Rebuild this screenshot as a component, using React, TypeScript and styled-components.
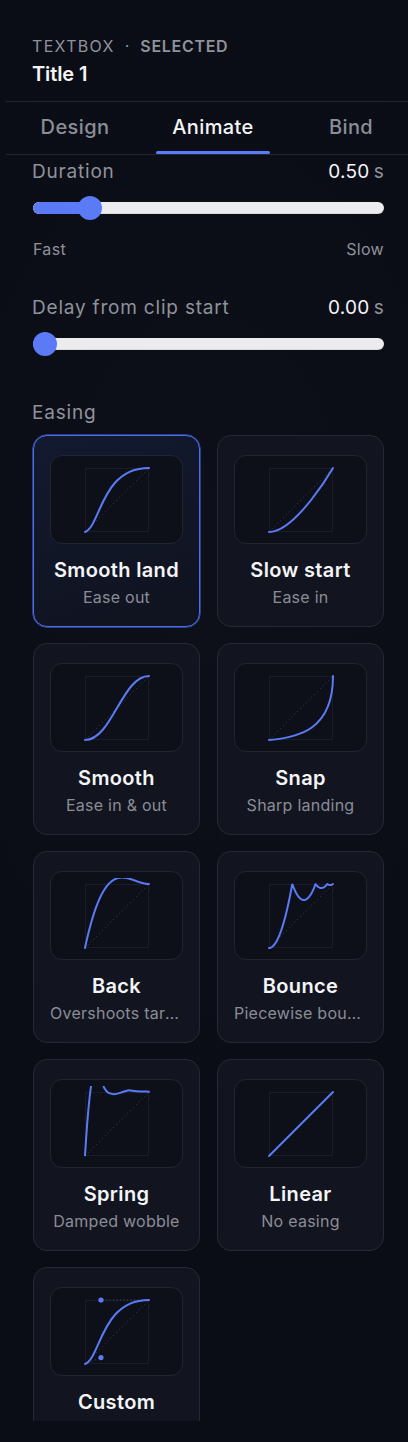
import React from "react";
import styled, { createGlobalStyle } from "styled-components";

const GlobalStyle = createGlobalStyle`
  html, body { margin: 0; padding: 0; background: #0b0d16; }
  body { font-family: Inter, "Noto Sans", sans-serif; overflow: hidden; -webkit-font-smoothing: antialiased; }
  * { box-sizing: border-box; }
`;

const ACCENT = "#5a7bf5";

const Page = styled.div`
  width: 408px;
  height: 1442px;
  overflow: hidden;
  background: radial-gradient(120% 60% at 50% 40%, #0e1019 0%, #0b0d16 70%);
  color: #f2f3f6;
`;

const Header = styled.header`
  padding: 36px 32px 13px;
  display: flex;
  flex-direction: column;
  gap: 4px;
`;

const Eyebrow = styled.div`
  display: flex;
  align-items: center;
  height: 20px;
  font-size: 16px;
  color: #8f929b;
  text-transform: uppercase;
  white-space: nowrap;
`;

const Kind = styled.span`
  letter-spacing: 1.3px;
  font-weight: 400;
`;

const Sep = styled.span`
  margin: 0 11px 0 10px;
  font-weight: 400;
`;

const State = styled.span`
  letter-spacing: 0.7px;
  font-weight: 600;
`;

const Title = styled.h1`
  margin: 0;
  font-size: 20px;
  line-height: 28px;
  font-weight: 600;
  color: #f4f5f7;
  letter-spacing: -0.1px;
`;

const Divider = styled.div`
  height: 1px;
  margin-left: 6px;
  background: #242732;
`;

const Tabs = styled.nav`
  display: grid;
  grid-template-columns: repeat(3, 138px);
  margin-left: 6px;
  width: 414px;
  height: 52px;
`;

const Tab = styled.div<{ $active?: boolean }>`
  display: flex;
  flex-direction: column;
  font-size: 20px;
  font-weight: 500;
  letter-spacing: 0.4px;
  color: ${(p) => (p.$active ? "#f4f5f7" : "#8b8e97")};
`;

const TabLabel = styled.span`
  flex: 1;
  display: flex;
  align-items: center;
  justify-content: center;
  padding-top: 1px;
`;

const TabBar = styled.span<{ $active?: boolean }>`
  height: 3px;
  margin: 0 12px;
  border-radius: 2px;
  background: ${(p) => (p.$active ? ACCENT : "transparent")};
`;

const Scroll = styled.main`
  height: 1266px;
  overflow: hidden;
  padding: 4px 24px 0 33px;
  display: flex;
  flex-direction: column;
  & > * {
    flex-shrink: 0;
  }
`;

const FieldHead = styled.div<{ $mt?: number }>`
  display: flex;
  justify-content: space-between;
  align-items: center;
  height: 24px;
  margin-top: ${(p) => p.$mt ?? 0}px;
`;

const Label = styled.span`
  font-size: 19px;
  color: #8f929b;
  letter-spacing: 0.8px;
  margin-left: -1px;
`;

const Value = styled.span`
  font-size: 19px;
  color: #f4f5f7;
  letter-spacing: 0.3px;
`;

const Unit = styled.span`
  color: #8f929b;
  margin-left: 4px;
`;

const SliderBox = styled.div<{ $mt: number }>`
  position: relative;
  height: 24px;
  margin-top: ${(p) => p.$mt}px;
  display: flex;
  align-items: center;
`;

const Track = styled.div`
  position: relative;
  width: 100%;
  height: 12px;
  border-radius: 6px;
  background: #ececee;
  box-shadow: inset 0 -1px 0 rgba(0, 0, 0, 0.08);
  overflow: hidden;
`;

const Fill = styled.div`
  height: 100%;
  background: ${ACCENT};
  border-radius: 6px 0 0 6px;
`;

const Thumb = styled.div`
  position: absolute;
  top: 0;
  width: 24px;
  height: 24px;
  border-radius: 50%;
  background: ${ACCENT};
`;

const Scale = styled.div`
  display: flex;
  justify-content: space-between;
  height: 20px;
  margin-top: 19px;
  font-size: 16px;
  color: #8f929b;
  align-items: center;
  letter-spacing: 0.3px;
`;

const SectionLabel = styled.div`
  height: 24px;
  margin-top: 44px;
  font-size: 19px;
  color: #8f929b;
  display: flex;
  align-items: center;
  letter-spacing: 0.8px;
  margin-left: -1px;
`;

const Grid = styled.div`
  margin-top: 11px;
  display: grid;
  grid-template-columns: 167px 167px;
  column-gap: 17px;
  row-gap: 16px;
`;

const Card = styled.div<{ $selected?: boolean }>`
  height: 192px;
  border-radius: 14px;
  border: 1px solid ${(p) => (p.$selected ? "#4e6ef0" : "#262935")};
  background: ${(p) =>
    p.$selected
      ? "linear-gradient(160deg, #121a31 0%, #111626 55%, #10131f 100%)"
      : "#121420"};
  box-shadow: ${(p) => (p.$selected ? "0 0 0 0.5px #4e6ef0" : "none")};
  padding: 19px 16px 0;
  display: flex;
  flex-direction: column;
  align-items: center;
  overflow: hidden;
`;

const Preview = styled.div`
  width: 133px;
  height: 89px;
  border-radius: 12px;
  border: 1px solid #222531;
  background: #0e1019;
  display: flex;
  align-items: center;
  justify-content: center;
  flex-shrink: 0;
`;

const CardTitle = styled.div`
  margin-top: 13px;
  height: 26px;
  line-height: 26px;
  font-size: 20px;
  font-weight: 600;
  color: #f4f5f7;
  letter-spacing: 0.35px;
  white-space: nowrap;
  flex-shrink: 0;
`;

const CardSub = styled.div`
  margin-top: 4px;
  height: 20px;
  line-height: 20px;
  width: 100%;
  text-align: center;
  font-size: 16px;
  color: #8a8d96;
  letter-spacing: 0.25px;
  white-space: nowrap;
  overflow: hidden;
  text-overflow: ellipsis;
  flex-shrink: 0;
`;

// ---------- curve geometry ----------
const S = 64;
const P = 6;
const X = (t: number) => P + S * t;
const Y = (v: number) => P + S * (1 - v);
const f = (n: number) => n.toFixed(2);

type Curve =
  | { kind: "bezier"; p: [number, number, number, number]; handles?: boolean }
  | { kind: "fn"; fn: (t: number) => number }
  | { kind: "pts"; pts: [number, number][] };

function bezierPath(p: [number, number, number, number]) {
  return `M${f(X(0))} ${f(Y(0))} C${f(X(p[0]))} ${f(Y(p[1]))} ${f(X(p[2]))} ${f(Y(p[3]))} ${f(X(1))} ${f(Y(1))}`;
}

function fnPath(fn: (t: number) => number) {
  const n = 240;
  let d = "";
  for (let i = 0; i <= n; i++) {
    const t = i / n;
    d += `${i === 0 ? "M" : "L"}${f(X(t))} ${f(Y(fn(t)))} `;
  }
  return d;
}

function splinePath(pts: [number, number][]) {
  const q = pts.map(([t, v]) => [X(t), Y(v)] as [number, number]);
  let d = `M${f(q[0][0])} ${f(q[0][1])}`;
  for (let i = 0; i < q.length - 1; i++) {
    const p0 = q[Math.max(0, i - 1)];
    const p1 = q[i];
    const p2 = q[i + 1];
    const p3 = q[Math.min(q.length - 1, i + 2)];
    const c1x = p1[0] + (p2[0] - p0[0]) / 6;
    const c1y = p1[1] + (p2[1] - p0[1]) / 6;
    const c2x = p2[0] - (p3[0] - p1[0]) / 6;
    const c2y = p2[1] - (p3[1] - p1[1]) / 6;
    d += ` C${f(c1x)} ${f(c1y)} ${f(c2x)} ${f(c2y)} ${f(p2[0])} ${f(p2[1])}`;
  }
  return d;
}

const easeOutBack = (t: number) => {
  const c1 = 1.70158;
  const c3 = c1 + 1;
  return 1 + c3 * Math.pow(t - 1, 3) + c1 * Math.pow(t - 1, 2);
};

const easeOutBounce = (x: number) => {
  const n1 = 7.5625;
  const d1 = 2.75;
  if (x < 1 / d1) return n1 * x * x;
  if (x < 2 / d1) return n1 * (x -= 1.5 / d1) * x + 0.75;
  if (x < 2.5 / d1) return n1 * (x -= 2.25 / d1) * x + 0.9375;
  return n1 * (x -= 2.625 / d1) * x + 0.984375;
};

const springPts: [number, number][] = [
  [0, 0.01], [0.03, 0.45], [0.06, 0.8], [0.095, 1.1], [0.14, 1.36], [0.2, 1.46],
  [0.25, 1.3], [0.29, 1.09], [0.335, 1.015], [0.38, 0.982], [0.46, 0.966],
  [0.56, 0.99], [0.67, 1.025], [0.8, 1.012], [1, 1.005],
];

function EaseGraph({ curve }: { curve: Curve }) {
  let d = "";
  if (curve.kind === "bezier") d = bezierPath(curve.p);
  else if (curve.kind === "fn") d = fnPath(curve.fn);
  else d = splinePath(curve.pts);
  return (
    <svg width={76} height={76} viewBox="0 0 76 76">
      <rect x={P + 0.5} y={P + 0.5} width={S - 1} height={S - 1} fill="none" stroke="#1a1d28" strokeWidth={1} />
      <line x1={X(0)} y1={Y(0)} x2={X(1)} y2={Y(1)} stroke="#3a3e4d" strokeWidth={1} strokeDasharray="1 3" />
      {curve.kind === "bezier" && curve.handles && (
        <>
          <line x1={X(0)} y1={Y(0)} x2={X(curve.p[0])} y2={Y(curve.p[1])} stroke="#4a4e5e" strokeWidth={1} strokeDasharray="1 2.5" />
          <line x1={X(1)} y1={Y(1)} x2={X(curve.p[2])} y2={Y(curve.p[3])} stroke="#4a4e5e" strokeWidth={1} strokeDasharray="1 2.5" />
        </>
      )}
      <path d={d} fill="none" stroke={ACCENT} strokeWidth={2} strokeLinecap="round" strokeLinejoin="round" />
      {curve.kind === "bezier" && curve.handles && (
        <>
          <circle cx={X(curve.p[0])} cy={Y(curve.p[1])} r={2.6} fill={ACCENT} />
          <circle cx={X(curve.p[2])} cy={Y(curve.p[3])} r={2.6} fill={ACCENT} />
        </>
      )}
    </svg>
  );
}

type Preset = { name: string; sub?: string; curve: Curve; selected?: boolean };

const presets: Preset[] = [
  { name: "Smooth land", sub: "Ease out", curve: { kind: "bezier", p: [0.25, 0.1, 0.25, 1] }, selected: true },
  { name: "Slow start", sub: "Ease in", curve: { kind: "bezier", p: [0.42, 0, 1, 1] } },
  { name: "Smooth", sub: "Ease in & out", curve: { kind: "bezier", p: [0.42, 0, 0.58, 1] } },
  { name: "Snap", sub: "Sharp landing", curve: { kind: "bezier", p: [0.45, 0.04, 1, 0.15] } },
  { name: "Back", sub: "Overshoots target, then settles", curve: { kind: "fn", fn: easeOutBack } },
  { name: "Bounce", sub: "Piecewise bounce at the end", curve: { kind: "fn", fn: easeOutBounce } },
  { name: "Spring", sub: "Damped wobble", curve: { kind: "pts", pts: springPts } },
  { name: "Linear", sub: "No easing", curve: { kind: "bezier", p: [0, 0, 1, 1] } },
  { name: "Custom", sub: "Your own curve", curve: { kind: "bezier", p: [0.25, 0.1, 0.25, 1], handles: true } },
];

function Slider({ value, min, max, mt }: { value: number; min: number; max: number; mt: number }) {
  const p = (value - min) / (max - min);
  return (
    <SliderBox $mt={mt}>
      <Track>
        <Fill style={{ width: `calc(${p} * (100% - 24px) + 12px)` }} />
      </Track>
      <Thumb style={{ left: `calc(${p} * (100% - 24px))` }} />
    </SliderBox>
  );
}

export default function App() {
  return (
    <Page>
      <GlobalStyle />
      <Header>
        <Eyebrow>
          <Kind>Textbox</Kind>
          <Sep>·</Sep>
          <State>Selected</State>
        </Eyebrow>
        <Title>Title 1</Title>
      </Header>
      <Divider />
      <Tabs>
        <Tab>
          <TabLabel>Design</TabLabel>
          <TabBar />
        </Tab>
        <Tab $active>
          <TabLabel>Animate</TabLabel>
          <TabBar $active />
        </Tab>
        <Tab>
          <TabLabel>Bind</TabLabel>
          <TabBar />
        </Tab>
      </Tabs>
      <Divider />
      <Scroll>
        <FieldHead>
          <Label>Duration</Label>
          <Value>
            0.50<Unit>s</Unit>
          </Value>
        </FieldHead>
        <Slider value={0.5} min={0.1} max={3} mt={13} />
        <Scale>
          <span>Fast</span>
          <span>Slow</span>
        </Scale>
        <FieldHead $mt={36}>
          <Label>Delay from clip start</Label>
          <Value>
            0.00<Unit>s</Unit>
          </Value>
        </FieldHead>
        <Slider value={0} min={0} max={5} mt={13} />
        <SectionLabel>Easing</SectionLabel>
        <Grid>
          {presets.map((pr) => (
            <Card key={pr.name} $selected={pr.selected}>
              <Preview>
                <EaseGraph curve={pr.curve} />
              </Preview>
              <CardTitle>{pr.name}</CardTitle>
              {pr.sub && <CardSub>{pr.sub}</CardSub>}
            </Card>
          ))}
        </Grid>
      </Scroll>
    </Page>
  );
}
